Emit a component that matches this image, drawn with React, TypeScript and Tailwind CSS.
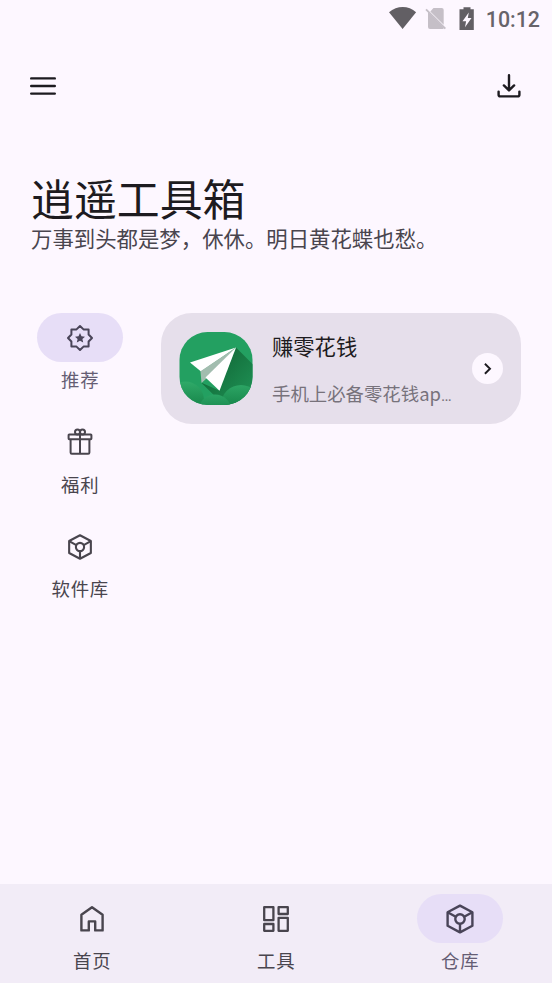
import type { ReactNode } from "react";

interface NavItem {
  label: string;
  icon: ReactNode;
  active?: boolean;
}

const StatusIcons = () => (
  <svg width="90" height="26" viewBox="0 0 90 26" fill="#625f64">
    {/* wifi */}
    <path d="M0 5.2C8 -1.7 19.6 -1.7 27.1 5.2L13.6 22Z" />
    {/* no sim */}
    <g fill="#c5bfc7">
      <path d="M44.5 1H52.7Q54.7 1 54.7 3V17.8L41.3 4.4Z" />
      <path d="M39 5L54.5 20.5V22H41Q39 22 39 20Z" />
      <path d="M36.4 3L37.7 1.7L57 21L55.7 22.3Z" />
    </g>
    {/* battery */}
    <path
      fillRule="evenodd"
      d="M74.5 0.3H81.5V2.3H84.8V23H70.5V2.3H74.5ZM79.8 5.5L73.5 14.3H77.1L76 20.2L82.5 11H78.8Z"
    />
  </svg>
);

const MenuIcon = () => (
  <svg width="26" height="20" viewBox="0 0 26 20" fill="none" stroke="#1d1b20" strokeWidth="2.4" strokeLinecap="round">
    <path d="M1.2 2.4H24.8M1.2 10H24.8M1.2 17.6H24.8" />
  </svg>
);

const DownloadIcon = () => (
  <svg width="26" height="26" viewBox="0 0 26 26" fill="none" stroke="#1d1b20" strokeWidth="2.4" strokeLinecap="round" strokeLinejoin="round">
    <path d="M13 2.2V17M7.9 12.4L13 17.4L18.1 12.4M2.6 18.6V21.8Q2.6 23.4 4.2 23.4H21.8Q23.4 23.4 23.4 21.8V18.6" />
  </svg>
);

const AwardIcon = () => (
  <svg width="28" height="28" viewBox="-14 -14 28 28" fill="none" stroke="#494458" strokeWidth="2" strokeLinejoin="round">
    <path d="M0 -12L3.5 -8.6H8.6V-3.5L12 0L8.6 3.5V8.6H3.5L0 12L-3.5 8.6H-8.6V3.5L-12 0L-8.6 -3.5V-8.6H-3.5Z" />
    <path
      d="M0 -5L1.5 -1.7L5 -1.3L2.4 1.1L3.2 4.6L0 2.8L-3.2 4.6L-2.4 1.1L-5 -1.3L-1.5 -1.7Z"
      fill="#494458"
      stroke="none"
    />
  </svg>
);

const GiftIcon = () => (
  <svg width="28" height="28" viewBox="-14 -14 28 28" fill="none" stroke="#49454e" strokeWidth="2" strokeLinejoin="round">
    <rect x="-11.4" y="-7.5" width="22.8" height="4.7" rx="0.6" />
    <path d="M-9.4 -2.8V10.6Q-9.4 11.8 -8.2 11.8H8.2Q9.4 11.8 9.4 10.6V-2.8M0 -7.5V11.8" />
    <circle cx="-2.5" cy="-9.9" r="2.5" />
    <circle cx="2.5" cy="-9.9" r="2.5" />
  </svg>
);

const CubeIcon = ({ size, color }: { size: number; color: string }) => (
  <svg width={size} height={size} viewBox="-16 -16 32 32" fill="none" stroke={color} strokeWidth="2.4" strokeLinejoin="round">
    <path d="M0 -13.4L12.4 -6.8V6.8L0 13.4L-12.4 6.8V-6.8Z" />
    <circle cx="0" cy="0" r="4.7" />
    <path d="M-12.4 -6.8L-4.2 -2.2M12.4 -6.8L4.2 -2.2M0 4.7V13.4" />
  </svg>
);

const HomeIcon = () => (
  <svg width="28" height="28" viewBox="-14 -14 28 28" fill="none" stroke="#49454e" strokeWidth="2.4" strokeLinejoin="round">
    <path d="M-10.6 -4.2L0 -11.8L10.6 -4.2V11.4H3.2V2.4H-3.2V11.4H-10.6Z" />
  </svg>
);

const DashboardIcon = () => (
  <svg width="28" height="28" viewBox="-14 -14 28 28" fill="none" stroke="#49454e" strokeWidth="2.3" strokeLinejoin="round">
    <path d="M-11.8 -11.8H-2.6V1.2H-11.8ZM2.6 -11.8H11.8V-5H2.6ZM-11.8 5H-2.6V11.8H-11.8ZM2.6 -1.2H11.8V11.8H2.6Z" />
  </svg>
);

const PlaneLogo = () => (
  <svg width="74" height="74" viewBox="0 0 74 74">
    <defs>
      <clipPath id="logo-clip">
        <rect x="0.5" y="0" width="73" height="73" rx="28" />
      </clipPath>
      <linearGradient id="logo-shadow" x1="0.3" y1="0.2" x2="1" y2="0.9">
        <stop offset="0" stopColor="#126b39" />
        <stop offset="1" stopColor="#209457" />
      </linearGradient>
      <linearGradient id="logo-cloud" gradientUnits="userSpaceOnUse" x1="0" y1="50" x2="0" y2="74">
        <stop offset="0" stopColor="#2fa968" />
        <stop offset="1" stopColor="#17864a" />
      </linearGradient>
      <linearGradient id="logo-cloud-front" gradientUnits="userSpaceOnUse" x1="0" y1="62" x2="0" y2="80">
        <stop offset="0" stopColor="#2ca465" />
        <stop offset="1" stopColor="#17864a" />
      </linearGradient>
    </defs>
    <g clipPath="url(#logo-clip)">
      <rect width="74" height="74" fill="#23a061" />
      <path d="M57 15.5L74 32.5V74H46L22 50.5L40 58.5Z" fill="url(#logo-shadow)" />
      <circle cx="6.5" cy="68" r="18.5" fill="url(#logo-cloud)" />
      <circle cx="62" cy="73" r="20" fill="url(#logo-cloud)" />
      <circle cx="36" cy="79" r="16.5" fill="url(#logo-cloud-front)" />
      <path d="M57 15.5L11 30.5L22 39.5Z" fill="#fff" />
      <path d="M57 15.5L21.5 39.2L22.5 51L28 46Z" fill="#a2bdaf" />
      <path d="M57 15.5L26.5 45.5L40.5 58.8Z" fill="#fff" />
    </g>
  </svg>
);

const categories: NavItem[] = [
  { label: "推荐", icon: <AwardIcon />, active: true },
  { label: "福利", icon: <GiftIcon /> },
  { label: "软件库", icon: <CubeIcon size={28} color="#49454e" /> },
];

const tabs: NavItem[] = [
  { label: "首页", icon: <HomeIcon /> },
  { label: "工具", icon: <DashboardIcon /> },
  { label: "仓库", icon: <CubeIcon size={32} color="#494458" />, active: true },
];

const NavButton = ({ label, icon, active }: NavItem) => (
  <button className="flex flex-col items-center">
    <span className={`flex h-[49px] w-[86px] items-center justify-center rounded-full ${active ? "bg-[#e7def7]" : ""}`}>
      {icon}
    </span>
    <span
      className={`mt-[3px] h-[29px] pl-[0.5px] text-[18.4px] leading-7 tracking-[0.76px] ${active ? "text-[#655d74]" : "text-[#49454e]"}`}
    >
      {label}
    </span>
  </button>
);

export default function App() {
  return (
    <div className="flex h-screen w-full flex-col overflow-hidden bg-[#fdf7ff] font-['Noto_Sans_CJK_SC',sans-serif] text-[#1d1b20]">
      {/* Status bar */}
      <div className="flex h-10 shrink-0 items-center justify-end pr-3">
        <StatusIcons />
        <span className="ml-[7px] font-['Roboto',sans-serif] text-[21.4px] font-medium text-[#67646a]">10:12</span>
      </div>

      {/* Toolbar */}
      <header className="flex h-[92px] shrink-0 items-center justify-between px-[30px]">
        <button aria-label="菜单">
          <MenuIcon />
        </button>
        <button aria-label="下载">
          <DownloadIcon />
        </button>
      </header>

      <div className="mt-[39px] shrink-0 pl-[31px]">
        <h1 className="h-[53px] text-[42.9px] leading-[52px]">逍遥工具箱</h1>
        <p className="h-7 text-[21.4px] leading-7 text-[#49454e]">万事到头都是梦，休休。明日黄花蝶也愁。</p>
      </div>

      <main className="mt-[61px] flex flex-1 items-start pr-[31px] pl-[37px]">
        <nav className="flex w-[86px] flex-col gap-[23.5px]">
          {categories.map((item) => (
            <NavButton key={item.label} {...item} />
          ))}
        </nav>

        {/* App card */}
        <div className="ml-[38px] flex h-[111px] flex-1 items-center rounded-[31px] bg-[#e6dfeb] px-[18px]">
          <PlaneLogo />
          <div className="ml-[19px] w-[184px] shrink-0 whitespace-nowrap">
            <div className="text-[21.3px] leading-8">赚零花钱</div>
            <div className="mt-[17px] text-[18.4px] leading-7 text-[#77727b]">
              手机上必备零花钱ap<span className="font-['Roboto',sans-serif] text-base">…</span>
            </div>
          </div>
          <button className="ml-auto flex size-[31px] shrink-0 items-center justify-center rounded-full bg-[#fdf7ff]">
            <svg width="12" height="14" viewBox="0 0 12 14" fill="none" stroke="#1d1b20" strokeWidth="1.9">
              <path d="M2.9 1.8L8 6.8L2.9 11.8" />
            </svg>
          </button>
        </div>
      </main>

      {/* Bottom navigation */}
      <footer className="grid h-[99px] shrink-0 grid-cols-3 bg-[#f2ecf7] pt-2.5">
        {tabs.map((item) => (
          <NavButton key={item.label} {...item} />
        ))}
      </footer>
    </div>
  );
}
